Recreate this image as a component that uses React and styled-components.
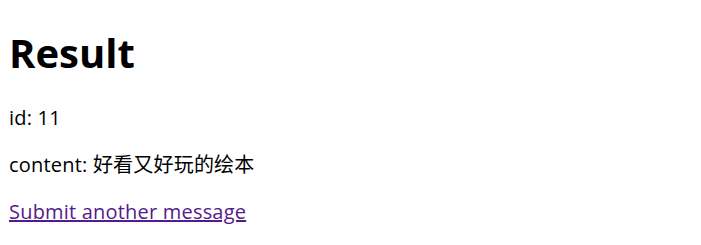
import React from "react";
import styled, { createGlobalStyle } from "styled-components";

const GlobalStyle = createGlobalStyle`
  body {
    margin: 8px 8px 8px 9px;
    background: #fff;
    font-family: "Open Sans", "Noto Sans CJK SC", sans-serif;
    font-size: 20px;
    color: #000;
  }
`;

const Title = styled.h1`
  font-size: 40px;
  font-weight: 700;
  margin: 18px 0 24px;
  line-height: 54px;
`;

const Line = styled.p`
  margin: 20px 0;
  line-height: 27px;
  letter-spacing: 0.2px;
`;

const BackLink = styled.a`
  color: #551a8b;
  text-decoration: underline;
`;

const App = () => {
  const result = { id: 11, content: "好看又好玩的绘本" };

  return (
    <React.Fragment>
      <GlobalStyle />
      <Title>Result</Title>
      <Line>id: {result.id}</Line>
      <Line>content: {result.content}</Line>
      <Line>
        <BackLink href="#">Submit another message</BackLink>
      </Line>
    </React.Fragment>
  );
};

export default App;
